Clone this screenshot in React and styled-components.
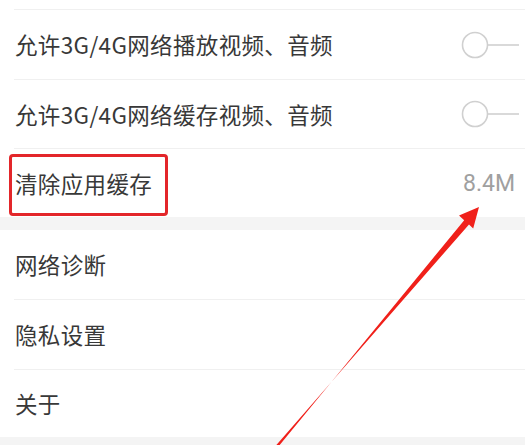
import React from 'react';
import styled, { createGlobalStyle } from 'styled-components';

const GlobalStyle = createGlobalStyle`
  html, body {
    margin: 0;
    padding: 0;
    background: #f4f4f4;
  }
  body {
    font-family: "Noto Sans CJK SC", "Noto Sans", sans-serif;
  }
`;

const Page = styled.div`
  position: relative;
  width: 525px;
  height: 445px;
  overflow: hidden;
  background: #f4f4f4;
`;

const Group = styled.div`
  background: #fff;
  padding-top: ${(p) => p.$top || 0}px;
`;

const Gap = styled.div`
  height: ${(p) => p.$h}px;
  background: #f4f4f4;
`;

const Row = styled.div`
  display: flex;
  align-items: center;
  justify-content: space-between;
  height: ${(p) => p.$h || 69}px;
  margin-left: 14px;
  padding-right: 6px;
  border-top: ${(p) => (p.$first ? 'none' : '1px solid #f0f0f0')};
  box-sizing: border-box;
`;

const Label = styled.span`
  font-size: 22.5px;
  color: #383838;
  padding-left: 1px;
  margin-top: -1px;
  letter-spacing: 0.35px;
`;

const Value = styled.span`
  font-size: 23px;
  color: #a0a0a0;
  font-family: "Roboto", "Noto Sans", sans-serif;
  margin-right: 4px;
`;

const Highlight = styled.div`
  position: absolute;
  left: 9px;
  top: 154px;
  width: 159px;
  height: 62px;
  border: 3px solid #e3262a;
  border-radius: 4px;
  box-sizing: border-box;
  pointer-events: none;
`;

const ArrowLayer = styled.svg`
  position: absolute;
  left: 0;
  top: 0;
  pointer-events: none;
`;

const ToggleWrap = styled.div`
  display: flex;
  align-items: center;
`;

const Toggle = () => (
  <svg width="58" height="30" viewBox="0 0 58 30">
    <circle cx="14" cy="15" r="12.5" fill="#fff" stroke="#d0d0d0" strokeWidth="1.6" />
    <line x1="26.5" y1="15" x2="58" y2="15" stroke="#d0d0d0" strokeWidth="1.6" />
  </svg>
);

export default function App() {
  return (
    <Page>
      <GlobalStyle />
      <Group $top={9}>
        <Row $h={70}>
          <Label>允许3G/4G网络播放视频、音频</Label>
          <ToggleWrap><Toggle /></ToggleWrap>
        </Row>
        <Row $h={69}>
          <Label>允许3G/4G网络缓存视频、音频</Label>
          <ToggleWrap><Toggle /></ToggleWrap>
        </Row>
        <Row $h={69}>
          <Label>清除应用缓存</Label>
          <Value>8.4M</Value>
        </Row>
      </Group>
      <Gap $h={13} />
      <Group>
        <Row $first $h={69}>
          <Label>网络诊断</Label>
        </Row>
        <Row $h={70}>
          <Label>隐私设置</Label>
        </Row>
        <Row $h={68}>
          <Label>关于</Label>
        </Row>
      </Group>
      <Highlight />
      <ArrowLayer width="525" height="445" viewBox="0 0 525 445">
        <polygon
          fill="#f0201a"
          points="278.2,446.8 464.2,220.2 459,215.6 479,207 473.2,228.6 469,224.4 276.2,445.2"
        />
      </ArrowLayer>
    </Page>
  );
}
